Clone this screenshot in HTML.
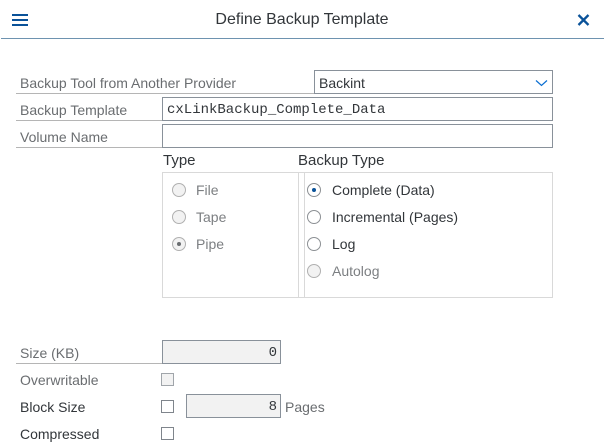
<!DOCTYPE html>
<html><head><meta charset="utf-8"><style>
*{margin:0;padding:0;box-sizing:border-box}
body{width:604px;height:447px;background:#fff;position:relative;overflow:hidden;font-family:"Liberation Sans",sans-serif;font-size:14px;color:#32363a}
.a{position:absolute}
.lbl{position:absolute;color:#6a6d70;font-size:14px;line-height:16px}
.ul{position:absolute;height:1px;background:#b5b5b5}
.inp{position:absolute;border:1px solid #89919a;background:#fff}
.mono{font-family:"Liberation Mono","DejaVu Sans Mono",monospace;font-size:14px}
.rad{position:absolute;width:14px;height:14px;border-radius:50%;border:1px solid #8c9094;background:#fff}
.rad.d{background:#f2f2f2;border-color:#b0b0b0}
.cb{position:absolute;width:13px;height:13px;border:1px solid #7f858c;background:#fff}
</style></head><body>
<div class="a" style="left:12px;top:14px;width:16px;height:2px;background:#0a5299"></div>
<div class="a" style="left:12px;top:19px;width:16px;height:2px;background:#0a5299"></div>
<div class="a" style="left:12px;top:24px;width:16px;height:2px;background:#0a5299"></div>
<div class="a" style="left:0;top:11px;width:604px;text-align:center;font-size:16px;color:#32363a;line-height:18px">Define Backup Template</div>
<svg class="a" style="left:577px;top:14px" width="13" height="12" viewBox="0 0 13 12"><path d="M1.5 1 L11.5 11 M11.5 1 L1.5 11" stroke="#0a5299" stroke-width="2.3"/></svg>
<div class="a" style="left:1px;top:38px;width:603px;height:1px;background:#6e93b0"></div>

<div class="lbl" style="left:20px;top:75px">Backup Tool from Another Provider</div>
<div class="ul" style="left:16px;top:93px;width:298px"></div>
<div class="inp" style="left:314px;top:70px;width:239px;height:24px"></div>
<div class="a" style="left:319px;top:75px;line-height:16px">Backint</div>
<svg class="a" style="left:535px;top:79px" width="13" height="8" viewBox="0 0 13 8"><path d="M1 1.5 L6.5 6.5 L12 1.5" fill="none" stroke="#0a6ed1" stroke-width="1.2"/></svg>

<div class="lbl" style="left:20px;top:102px">Backup Template</div>
<div class="ul" style="left:16px;top:120px;width:146px"></div>
<div class="inp" style="left:162px;top:97px;width:391px;height:24px"></div>
<div class="a mono" style="left:167px;top:102px;line-height:16px;color:#32363a">cxLinkBackup_Complete_Data</div>

<div class="lbl" style="left:20px;top:129px">Volume Name</div>
<div class="ul" style="left:16px;top:147px;width:146px"></div>
<div class="inp" style="left:162px;top:124px;width:391px;height:24px"></div>

<div class="a" style="left:163px;top:152px;font-size:15px;line-height:17px">Type</div>
<div class="a" style="left:298px;top:152px;font-size:15px;line-height:17px">Backup Type</div>
<div class="a" style="left:162px;top:172px;width:391px;height:126px;border:1px solid #d9d9d9"></div>
<div class="a" style="left:298px;top:172px;width:1px;height:126px;background:#d9d9d9"></div>
<div class="a" style="left:304px;top:172px;width:1px;height:126px;background:#d9d9d9"></div>

<div class="rad d" style="left:172px;top:183px"></div><div class="lbl" style="left:196px;top:182px;color:#7c7f82">File</div>
<div class="rad d" style="left:172px;top:210px"></div><div class="lbl" style="left:196px;top:209px;color:#7c7f82">Tape</div>
<div class="rad d" style="left:172px;top:237px"></div><div class="a" style="left:177px;top:242px;width:4px;height:4px;border-radius:50%;background:#6a6d70"></div><div class="lbl" style="left:196px;top:236px;color:#7c7f82">Pipe</div>

<div class="rad" style="left:307px;top:183px"></div><div class="a" style="left:312px;top:188px;width:4px;height:4px;border-radius:50%;background:#0a5299"></div><div class="a" style="left:332px;top:182px;line-height:16px">Complete (Data)</div>
<div class="rad" style="left:307px;top:210px"></div><div class="a" style="left:332px;top:209px;line-height:16px">Incremental (Pages)</div>
<div class="rad" style="left:307px;top:237px"></div><div class="a" style="left:332px;top:236px;line-height:16px">Log</div>
<div class="rad d" style="left:307px;top:264px"></div><div class="lbl" style="left:332px;top:263px;color:#7c7f82">Autolog</div>

<div class="lbl" style="left:20px;top:345px">Size (KB)</div>
<div class="ul" style="left:16px;top:363px;width:146px"></div>
<div class="inp" style="left:162px;top:340px;width:119px;height:24px;background:#f2f2f2"></div>
<div class="a mono" style="left:162px;top:345px;width:115px;text-align:right;line-height:16px">0</div>

<div class="lbl" style="left:20px;top:372px">Overwritable</div>
<div class="cb" style="left:161px;top:373px;background:#f2f2f2;border-color:#a0a5aa"></div>

<div class="a" style="left:20px;top:399px;line-height:16px">Block Size</div>
<div class="cb" style="left:161px;top:400px"></div>
<div class="inp" style="left:186px;top:394px;width:95px;height:24px;background:#f2f2f2"></div>
<div class="a mono" style="left:186px;top:399px;width:91px;text-align:right;line-height:16px">8</div>
<div class="lbl" style="left:285px;top:399px">Pages</div>

<div class="a" style="left:20px;top:426px;line-height:16px">Compressed</div>
<div class="cb" style="left:161px;top:427px"></div>
</body></html>
